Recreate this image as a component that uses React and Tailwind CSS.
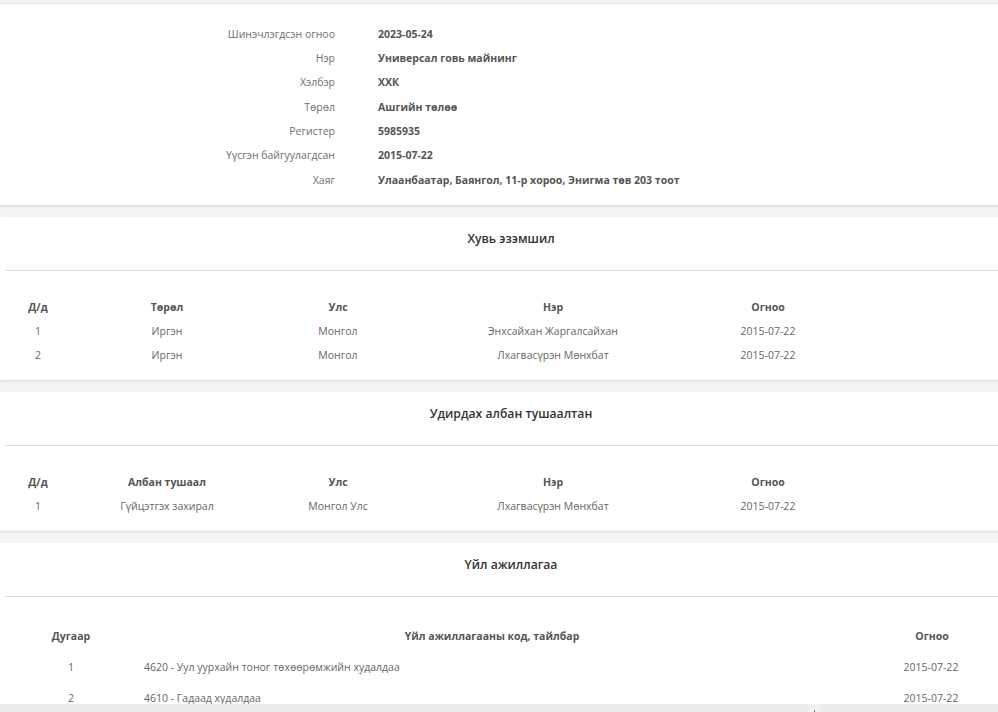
import React from "react";

const info = [
  ["Шинэчлэгдсэн огноо", "2023-05-24"],
  ["Нэр", "Универсал говь майнинг"],
  ["Хэлбэр", "ХХК"],
  ["Төрөл", "Ашгийн төлөө"],
  ["Регистер", "5985935"],
  ["Үүсгэн байгуулагдсан", "2015-07-22"],
  ["Хаяг", "Улаанбаатар, Баянгол, 11-р хороо, Энигма төв 203 тоот"],
];

function Card({ children, className = "" }) {
  return (
    <div className={"bg-white shadow-[0_1px_2px_rgba(0,0,0,0.12)] " + className}>
      {children}
    </div>
  );
}

function Title({ children }) {
  return (
    <>
      <div className="h-[53px] pt-[13.5px] text-center text-[12.2px] leading-[18px] font-semibold text-[#333]">
        {children}
      </div>
      <div className="ml-[5px] border-t border-[#dcdcdc]" />
    </>
  );
}

function FiveColTable({ head, rows }) {
  const widths = ["w-[76px]", "w-[182px]", "w-[160px]", "w-[270px]", "w-[160px]"];
  return (
    <div className="pt-[25px] pb-[12px]">
      <div className="flex h-[24px] items-center font-bold text-[#555]">
        {head.map((h, i) => (
          <div key={i} className={widths[i] + " shrink-0 text-center"}>{h}</div>
        ))}
      </div>
      {rows.map((r, j) => (
        <div key={j} className="flex h-[24px] items-center text-[#666]">
          {r.map((c, i) => (
            <div key={i} className={widths[i] + " shrink-0 text-center"}>{c}</div>
          ))}
        </div>
      ))}
    </div>
  );
}

export default function App() {
  return (
    <div className="w-[998px] h-[712px] overflow-hidden bg-[#f4f4f4] text-[10.5px] flex flex-col" style={{ fontFamily: '"Open Sans", "Noto Sans", sans-serif' }}>
      <div className="w-[1022px] h-[704px] overflow-hidden flex flex-col gap-[12px]">
        <div className="h-[3px] shrink-0 border-b border-[#e6e6e6] box-content" />
        <Card className="-mt-[12px] pt-[18.5px] pb-[12.2px]">
          {info.map(([l, v], i) => (
            <div key={i} className="grid grid-cols-[335px_1fr] gap-x-[43px] h-[24.33px] items-center">
              <div className="text-right text-[#6e6e6e]">{l}</div>
              <div className="font-bold text-[#555]">{v}</div>
            </div>
          ))}
        </Card>
        <Card>
          <Title>Хувь эзэмшил</Title>
          <FiveColTable
            head={["Д/д", "Төрөл", "Улс", "Нэр", "Огноо"]}
            rows={[
              ["1", "Иргэн", "Монгол", "Энхсайхан Жаргалсайхан", "2015-07-22"],
              ["2", "Иргэн", "Монгол", "Лхагвасүрэн Мөнхбат", "2015-07-22"],
            ]}
          />
        </Card>
        <Card>
          <Title>Удирдах албан тушаалтан</Title>
          <FiveColTable
            head={["Д/д", "Албан тушаал", "Улс", "Нэр", "Огноо"]}
            rows={[["1", "Гүйцэтгэх захирал", "Монгол Улс", "Лхагвасүрэн Мөнхбат", "2015-07-22"]]}
          />
        </Card>
        <Card className="flex-1 overflow-hidden">
          <Title>Үйл ажиллагаа</Title>
          <div className="pt-[24.5px]">
            <div className="flex h-[31px] items-center font-bold text-[#555]">
              <div className="w-[142px] shrink-0 text-center">Дугаар</div>
              <div className="w-[700px] shrink-0 text-center">Үйл ажиллагааны код, тайлбар</div>
              <div className="w-[180px] shrink-0 text-center">Огноо</div>
            </div>
            {[
              ["1", "4620 - Уул уурхайн тоног төхөөрөмжийн худалдаа", "2015-07-22"],
              ["2", "4610 - Гадаад худалдаа", "2015-07-22"],
            ].map((r, j) => (
              <div key={j} className="flex h-[31px] items-center text-[#666]">
                <div className="w-[142px] shrink-0 text-center">{r[0]}</div>
                <div className="w-[700px] shrink-0 pl-[2px]">{r[1]}</div>
                <div className="w-[180px] shrink-0 text-center pr-[2px]">{r[2]}</div>
              </div>
            ))}
          </div>
        </Card>
      </div>
      <div className="h-[8px] bg-[#ececec] flex">
        <div className="ml-[808px] w-[12px] h-full bg-[#f2f2f2] flex items-end justify-center">
          <div className="w-[1px] h-[2px] bg-[#777]" />
        </div>
      </div>
    </div>
  );
}
